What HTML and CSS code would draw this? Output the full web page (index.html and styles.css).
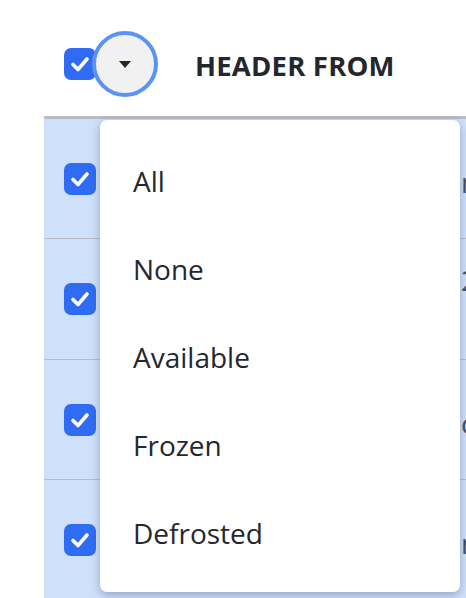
FILE: index.html
```html
<!DOCTYPE html>
<html>
<head>
<meta charset="utf-8">
<link rel="stylesheet" href="styles.css">
</head>
<body>
<div class="table">
  <div class="head">
    <span class="cb">
      <svg viewBox="0 0 32 32" width="32" height="32"><path d="M9 16.5 L14 21.5 L23 11" fill="none" stroke="#fff" stroke-width="3.6" stroke-linecap="round" stroke-linejoin="round"/></svg>
    </span>
    <span class="toggle">
      <svg viewBox="0 0 12 7" width="12" height="7"><path d="M0 0 H12 L6 7 Z" fill="#23272d"/></svg>
    </span>
    <span class="htitle">HEADER FROM</span>
  </div>
  <div class="row r1">
    <span class="cb"><svg viewBox="0 0 32 32" width="32" height="32"><path d="M9 16.5 L14 21.5 L23 11" fill="none" stroke="#fff" stroke-width="3.6" stroke-linecap="round" stroke-linejoin="round"/></svg></span>
    <span class="cell">Supplier record</span>
    <span class="cell2">name</span>
  </div>
  <div class="row r2">
    <span class="cb"><svg viewBox="0 0 32 32" width="32" height="32"><path d="M9 16.5 L14 21.5 L23 11" fill="none" stroke="#fff" stroke-width="3.6" stroke-linecap="round" stroke-linejoin="round"/></svg></span>
    <span class="cell">Received on</span>
    <span class="cell2">2023</span>
  </div>
  <div class="row r3">
    <span class="cb"><svg viewBox="0 0 32 32" width="32" height="32"><path d="M9 16.5 L14 21.5 L23 11" fill="none" stroke="#fff" stroke-width="3.6" stroke-linecap="round" stroke-linejoin="round"/></svg></span>
    <span class="cell">Sender address</span>
    <span class="cell2">com</span>
  </div>
  <div class="row r4">
    <span class="cb"><svg viewBox="0 0 32 32" width="32" height="32"><path d="M9 16.5 L14 21.5 L23 11" fill="none" stroke="#fff" stroke-width="3.6" stroke-linecap="round" stroke-linejoin="round"/></svg></span>
    <span class="cell">Batch item</span>
    <span class="cell2">name</span>
  </div>
</div>
<ul class="menu">
  <li>All</li>
  <li>None</li>
  <li>Available</li>
  <li>Frozen</li>
  <li>Defrosted</li>
</ul>
</body>
</html>
```

FILE: styles.css
```css
html, body {
  margin: 0;
  padding: 0;
  background: #fff;
}
body {
  width: 466px;
  height: 598px;
  overflow: hidden;
  position: relative;
  font-family: "Open Sans", "Noto Sans", sans-serif;
  color: #24282e;
}
.table {
  margin-left: 44px;
}
.head {
  box-sizing: border-box;
  padding: 12px 0 0 20px;
  display: flex;
  align-items: center;
  border-bottom: 3px solid #b8bcc3;
  height: 119px;
}
.cb {
  width: 32px;
  height: 32px;
  border-radius: 7px;
  background: #2f6bf3;
  display: flex;
  flex-shrink: 0;
}
.toggle {
  width: 58px;
  height: 58px;
  border-radius: 50%;
  background: #f1f1f1;
  border: 4px solid #5a93f6;
  margin-left: -4px;
  display: flex;
  align-items: center;
  justify-content: center;
  flex-shrink: 0;
  position: relative;
}
.toggle svg {
  margin-top: 1px;
}
.htitle {
  margin-left: 37px;
  font-weight: 700;
  font-size: 27.5px;
  letter-spacing: 0.2px;
  margin-top: 3px;
}
.row {
  height: 120px;
  box-sizing: border-box;
  border-bottom: 1px solid #b6bcc6;
  background: #cfe0fb;
  display: flex;
  align-items: center;
  padding-left: 20px;
  font-size: 28px;
  color: #4a4f57;
  overflow: hidden;
}
.row.r2 { height: 121px; }
.cell {
  margin-left: 99px;
  width: 266px;
  white-space: nowrap;
  overflow: hidden;
  flex-shrink: 0;
}
.cell2 {
  white-space: nowrap;
}
.r1 .cell2 { margin-top: 6px; }
.r2 .cell2 { margin-top: -38px; }
.r3 .cell2 { margin-top: 6px; }
.r4 .cell2 { margin-top: 6px; }
.menu {
  position: absolute;
  left: 100px;
  top: 120px;
  width: 360px;
  height: 472px;
  box-sizing: border-box;
  margin: 0;
  padding: 17px 0 15px;
  list-style: none;
  background: #fff;
  border-radius: 7px;
  box-shadow: 0 3px 10px rgba(40, 60, 100, 0.35);
}
.menu li {
  height: 88px;
  display: flex;
  align-items: center;
  padding-left: 33px;
  font-size: 28px;
  color: #24282e;
}
```
